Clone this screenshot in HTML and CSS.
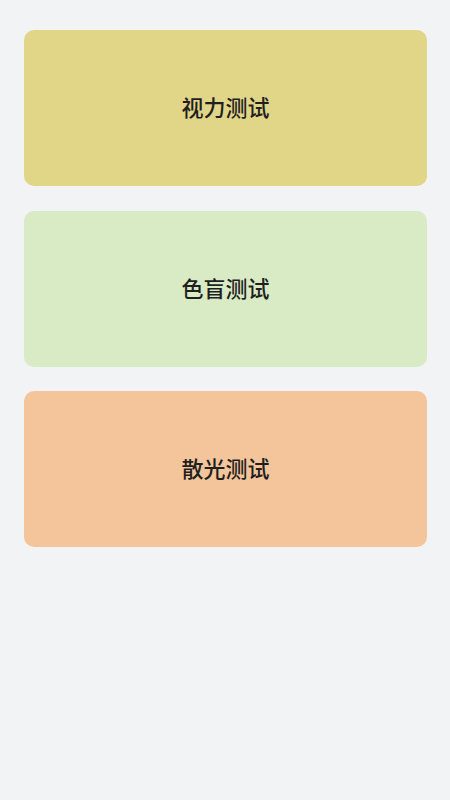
FILE: index.html
```html
<!DOCTYPE html>
<html lang="zh-CN">
<head>
    <meta charset="UTF-8">
    <meta name="viewport" content="width=device-width, initial-scale=1.0">
    <title>视力测试</title>
    <link rel="stylesheet" href="styles.css">
</head>
<body>
    <div class="test-list">
        <div class="test-card vision">视力测试</div>
        <div class="test-card color">色盲测试</div>
        <div class="test-card astig">散光测试</div>
    </div>
</body>
</html>
```

FILE: styles.css
```css
body {
    margin: 0;
    background-color: #f2f3f5;
    font-family: "Noto Sans CJK SC", "Noto Sans", sans-serif;
}
.test-list {
    display: flex;
    flex-direction: column;
    gap: 24.5px;
    padding: 30px 23px 30px 24px;
}
.test-card {
    height: 156px;
    box-sizing: border-box;
    padding-bottom: 4px;
    border-radius: 10px;
    display: flex;
    justify-content: center;
    align-items: center;
    font-size: 22px;
    font-weight: 500;
    color: #1f1f1f;
}
.vision {
    background-color: #e1d588;
}
.color {
    background-color: #d8ebc4;
}
.astig {
    background-color: #f4c59b;
}
```
